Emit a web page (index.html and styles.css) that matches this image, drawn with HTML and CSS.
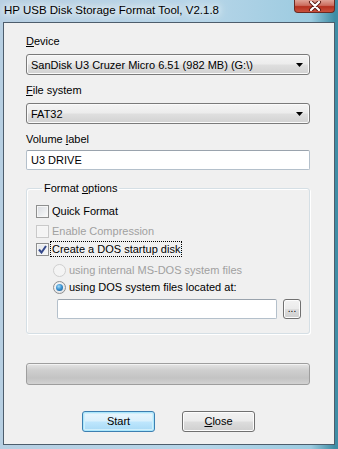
FILE: index.html
```html
<!DOCTYPE html>
<html lang="en">
<head>
    <meta charset="UTF-8">
    <title>HP USB Disk Storage Format Tool, V2.1.8</title>
    <link rel="stylesheet" href="styles.css">
</head>
<body>
    <div class="window">
        <div class="titlebar">
            <span class="title">HP USB Disk Storage Format Tool, V2.1.8</span>
            <div class="close-x">
                <svg width="14" height="10" viewBox="0 0 14 10">
                    <path d="M3 1 L11 9 M11 1 L3 9" stroke="#5a1a12" stroke-width="4" stroke-linecap="round"/>
                    <path d="M3 1 L11 9 M11 1 L3 9" stroke="#ffffff" stroke-width="2.2" stroke-linecap="round"/>
                </svg>
            </div>
        </div>

        <div class="client">
            <div class="label first"><u>D</u>evice</div>
            <div class="combo">
                <span>SanDisk U3 Cruzer Micro 6.51 (982 MB) (G:\)</span>
                <svg class="arrow" width="7" height="4" viewBox="0 0 7 4"><path d="M0 0 H7 L3.5 4 Z" fill="#000"/></svg>
            </div>

            <div class="label"><u>F</u>ile system</div>
            <div class="combo">
                <span>FAT32</span>
                <svg class="arrow" width="7" height="4" viewBox="0 0 7 4"><path d="M0 0 H7 L3.5 4 Z" fill="#000"/></svg>
            </div>

            <div class="label">Volume <u>l</u>abel</div>
            <div class="textbox label-box">U3 DRIVE</div>

            <fieldset class="group">
                <legend>Format <u>o</u>ptions</legend>

                <div class="row row-quick">
                    <span class="check"></span>
                    <span>Quick Format</span>
                </div>
                <div class="row row-compress disabled">
                    <span class="check"></span>
                    <span>Enable Compression</span>
                </div>
                <div class="row row-dos">
                    <span class="check checked">
                        <svg width="9" height="9" viewBox="0 0 9 9"><path d="M1 4.5 L3.5 7.5 L8 1" fill="none" stroke="#34488a" stroke-width="2"/></svg>
                    </span>
                    <span class="focus">Create a DOS startup disk</span>
                </div>
                <div class="row sub row-internal disabled">
                    <span class="radio"></span>
                    <span>using internal MS-DOS system files</span>
                </div>
                <div class="row sub row-files">
                    <span class="radio on"><span class="dot"></span></span>
                    <span>using DOS system files located at:</span>
                </div>
                <div class="path-row">
                    <div class="textbox path"></div>
                    <div class="browse">...</div>
                </div>
            </fieldset>

            <div class="progress"></div>

            <div class="buttons">
                <div class="btn default">Start</div>
                <div class="btn"><u>C</u>lose</div>
            </div>
        </div>
    </div>
</body>
</html>
```

FILE: styles.css
```css
/* window frame */
body {
    margin: 0;
    font-family: 'Liberation Sans', Arial, sans-serif;
    font-size: 11px;
    color: #000;
}

.window {
    width: 338px;
    height: 449px;
    box-sizing: border-box;
    padding: 0 3px 4px 3px;
    display: flex;
    flex-direction: column;
    background: linear-gradient(90deg, #b7cfe2 0%, #b6d5e8 60%, #9ccbe0 92%, #3f8da5 99%);
}

.titlebar {
    height: 22px;
    display: flex;
    justify-content: space-between;
    align-items: flex-start;
}

.title {
    font-size: 11.5px;
    line-height: 12px;
    margin-top: 4px;
    margin-left: 1px;
    color: #000;
    text-shadow: 0 0 6px #fff, 0 0 10px #fff, 0 0 14px #e8f4fb;
}

.close-x {
    width: 41px;
    height: 13px;
    display: flex;
    justify-content: center;
    align-items: center;
    border: 1px solid #6b2a22;
    border-top: none;
    border-radius: 0 0 4px 4px;
    background: linear-gradient(#e0a397 0%, #cc6d5e 45%, #b5311f 55%, #c9513d 100%);
    box-sizing: border-box;
}

/* client area */
.client {
    flex: 1;
    display: flex;
    flex-direction: column;
    background-color: #f0f0f0;
    border: 1px solid #4d5d6c;
    padding: 0 24px 0 22px;
}

.label {
    line-height: 14px;
    height: 14px;
    margin-top: 8px;
}

.label.first {
    margin-top: 11px;
}

.combo {
    margin-top: 6px;
    height: 21px;
    box-sizing: border-box;
    border: 1px solid #7a7a7a;
    border-radius: 3px;
    background: linear-gradient(#f4f4f4 0%, #ececec 48%, #dfdfdf 52%, #d2d2d2 100%);
    display: flex;
    align-items: center;
    justify-content: space-between;
    padding: 0 5px 0 4px;
    box-shadow: inset 0 0 0 1px #fafafa;
}

.arrow {
    margin-right: 1px;
}

.textbox {
    height: 20px;
    box-sizing: border-box;
    background: #fff;
    border: 1px solid #b4c0cb;
    border-top-color: #9aa3ad;
    border-radius: 2px;
    line-height: 18px;
    padding-left: 4px;
}

.label-box {
    margin-top: 4px;
}

/* format options group */
.group {
    margin: 11px 0 0 0;
    padding: 0 0 14px 9px;
    border: 1px solid #d5dfe5;
    border-radius: 3px;
    box-shadow: inset 1px 1px 0 #fff, 1px 1px 0 #fff;
    min-width: 0;
}

.group legend {
    padding: 0 2px;
    margin-left: 6px;
    line-height: 14px;
}

.row {
    display: flex;
    align-items: center;
    height: 14px;
    line-height: 14px;
}

.row-quick { margin-top: 9px; }
.row-compress { margin-top: 6px; }
.row-dos { margin-top: 4px; }
.row-internal { margin-top: 7px; }
.row-files { margin-top: 3px; }

.row.sub {
    padding-left: 17px;
}

.disabled {
    color: #a0a0a0;
}

.check {
    width: 13px;
    height: 13px;
    box-sizing: border-box;
    border: 1px solid #8e8f8f;
    background: linear-gradient(135deg, #d8dbe0 0%, #eceef0 60%, #fbfbfb 100%);
    box-shadow: inset 0 0 0 1px #f6f6f6;
    margin-right: 3px;
    display: flex;
    align-items: center;
    justify-content: center;
}

.disabled .check {
    border-color: #c9c9c9;
    background: #f4f4f4;
}

.check.checked {
    background: linear-gradient(135deg, #e3e6ea 0%, #f6f7f8 100%);
}

.focus {
    outline: 1px dotted #000;
    outline-offset: 0;
    padding: 0 1px;
    margin-left: -1px;
}

.radio {
    width: 13px;
    height: 13px;
    box-sizing: border-box;
    border-radius: 50%;
    border: 1px solid #8e8f8f;
    background: radial-gradient(circle at 40% 40%, #ffffff 0%, #e3e5e8 70%);
    margin-right: 3px;
    display: flex;
    align-items: center;
    justify-content: center;
}

.disabled .radio {
    border-color: #cfcfcf;
    background: #f4f4f4;
}

.dot {
    width: 7px;
    height: 7px;
    border-radius: 50%;
    background: radial-gradient(circle at 40% 35%, #a6dcf7 0%, #3f95d3 45%, #0d4e86 100%);
}

.path-row {
    display: flex;
    align-items: center;
    margin-top: 5px;
    padding-left: 21px;
}

.textbox.path {
    width: 220px;
}

.browse {
    width: 18px;
    height: 20px;
    margin-left: 6px;
    box-sizing: border-box;
    border: 1px solid #707070;
    border-radius: 3px;
    background: linear-gradient(#f2f2f2 0%, #ebebeb 48%, #dddddd 52%, #cfcfcf 100%);
    box-shadow: inset 0 0 0 1px #fcfcfc;
    text-align: center;
    line-height: 17px;
    font-size: 10px;
}

/* progress bar */
.progress {
    margin-top: 29px;
    height: 22px;
    box-sizing: border-box;
    border: 1px solid #9e9e9e;
    border-radius: 3px;
    background: linear-gradient(#e4e4e4 0%, #cfcfcf 30%, #c3c3c3 70%, #d2d2d2 100%);
    box-shadow: inset 0 1px 0 #f2f2f2;
}

/* buttons */
.buttons {
    display: flex;
    justify-content: center;
    gap: 27px;
    margin-top: 26px;
    padding-left: 1px;
}

.btn {
    width: 73px;
    height: 21px;
    box-sizing: border-box;
    border: 1px solid #707070;
    border-radius: 3px;
    background: linear-gradient(#f2f2f2 0%, #ebebeb 48%, #dddddd 52%, #cfcfcf 100%);
    box-shadow: inset 0 0 0 1px #fcfcfc;
    text-align: center;
    line-height: 19px;
}

.btn.default {
    border-color: #3c7fb1;
    background: linear-gradient(#eaf6fd 0%, #d9f0fc 48%, #bee6fd 52%, #a7d9f5 100%);
    box-shadow: inset 0 0 0 1px #48d6fe44, inset 0 0 0 2px #d0eefb;
}
```
